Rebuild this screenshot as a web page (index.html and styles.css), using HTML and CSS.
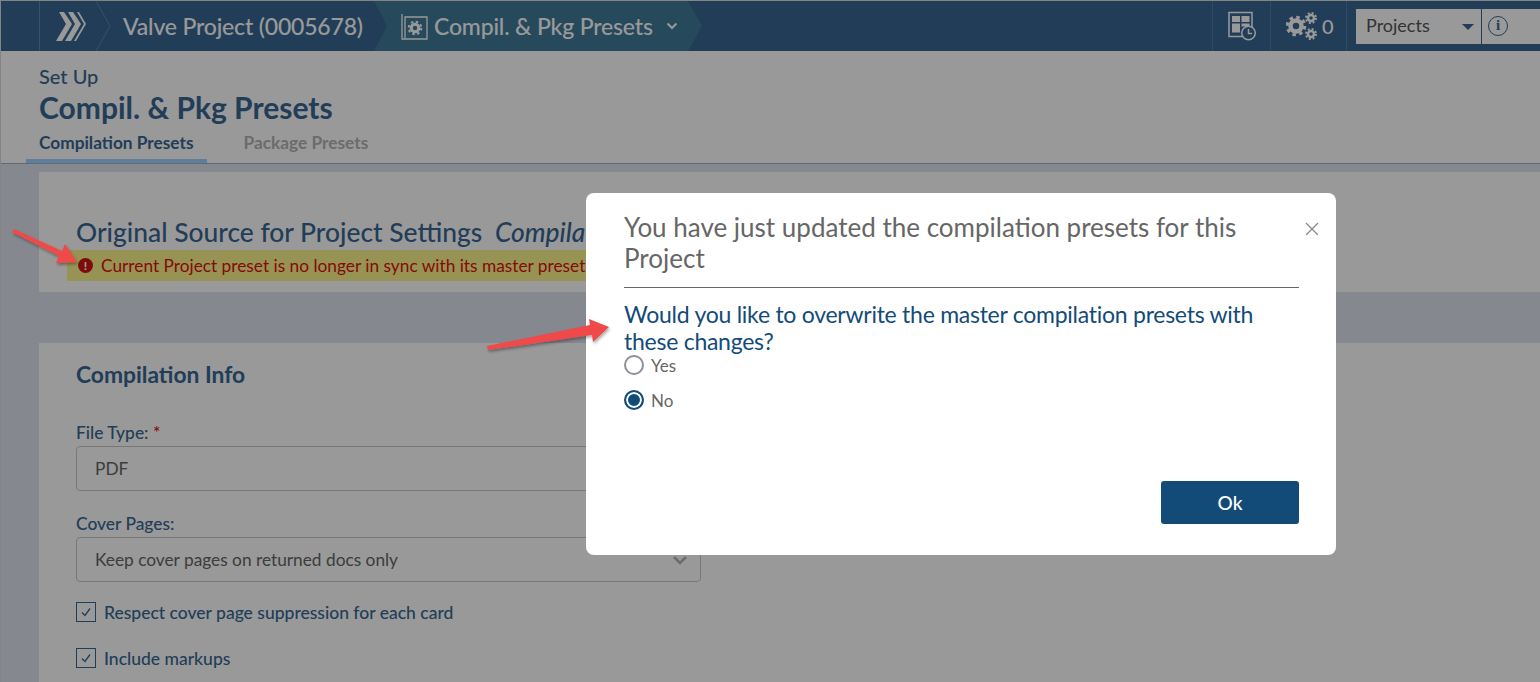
FILE: index.html
```html
<!DOCTYPE html>
<html lang="en">
<head>
  <meta charset="UTF-8">
  <meta name="viewport" content="width=device-width, initial-scale=1.0">
  <title>Compil. &amp; Pkg Presets</title>
  <link rel="stylesheet" href="styles.css">
</head>
<body>
  <div class="frame">
    <header class="topbar">
      <div class="logo-cell">
        <svg class="logo" width="32" height="30" viewBox="0 0 32 30">
          <path d="M4 0h5l8 12L7 29H1l10-17z M13 0h5l8 12-10 17h-6l10-17z M22 0h2l7 12-10 17h-2l10-17z" fill="#fff"/>
        </svg>
      </div>
      <svg class="chev" width="15" height="50" viewBox="0 0 15 50"><path d="M0 0l14 25L0 50" fill="none" stroke="#5d87a8"/></svg>
      <div class="crumb">Valve Project (0005678)</div>
      <div class="crumb-active">
        <svg width="28" height="28" viewBox="0 0 28 28">
          <path d="M1 2v25h25V5H4v21" fill="none" stroke="#fff" stroke-width="1.300"/>
          <circle cx="14" cy="16" r="3.800" fill="none" stroke="#fff" stroke-width="3"/>
          <circle cx="14" cy="16" r="6.300" fill="none" stroke="#fff" stroke-width="2" stroke-dasharray="2.500 2.450"/>
        </svg>
        <span class="crumb-text">Compil. &amp; Pkg Presets</span>
        <svg class="crumb-caret" width="12" height="8" viewBox="0 0 12 8"><path d="M1.500 1.500l4.500 4.500 4.500-4.500" fill="none" stroke="#fff" stroke-width="2"/></svg>
      </div>
      <div class="top-right">
        <div class="tool tool-board">
          <svg width="30" height="30" viewBox="0 0 30 30">
            <path d="M1 1.500h23v24H1z" fill="none" stroke="#fff" stroke-width="1.500"/>
            <path d="M4 5h8v6H4zM13.500 5h8v6h-8zM4 12.500h8v9H4zM13.500 12.500h8v3h-8z" fill="#fff"/>
            <circle cx="20.500" cy="22" r="6.800" fill="#386793" stroke="#fff" stroke-width="1.500"/>
            <path d="M20.500 18v4.500h3.500" fill="none" stroke="#fff" stroke-width="1.500"/>
          </svg>
        </div>
        <div class="tool tool-gears">
          <svg width="34" height="30" viewBox="0 0 34 30">
            <circle cx="10" cy="15" r="5.500" fill="none" stroke="#fff" stroke-width="4.500"/>
            <circle cx="10" cy="15" r="8.800" fill="none" stroke="#fff" stroke-width="3" stroke-dasharray="3.500 3.410"/>
            <circle cx="25" cy="7" r="3" fill="none" stroke="#fff" stroke-width="2.500"/>
            <circle cx="25" cy="7" r="5" fill="none" stroke="#fff" stroke-width="2" stroke-dasharray="2 1.930"/>
            <circle cx="25" cy="23" r="3" fill="none" stroke="#fff" stroke-width="2.500"/>
            <circle cx="25" cy="23" r="5" fill="none" stroke="#fff" stroke-width="2" stroke-dasharray="2 1.930"/>
          </svg>
          <span class="tool-count">0</span>
        </div>
        <div class="scope-select">
          <span>Projects</span>
          <span class="scope-caret"></span>
        </div>
        <div class="info-cell">
          <span class="info-icon">i</span>
        </div>
      </div>
    </header>

    <section class="subhead">
      <div class="subhead-kicker">Set Up</div>
      <h1>Compil. &amp; Pkg Presets</h1>
      <nav class="tabs">
        <a class="tab tab-on">Compilation Presets</a>
        <a class="tab">Package Presets</a>
      </nav>
    </section>

    <main class="content">
      <section class="card card-source">
        <h2>Original Source for Project Settings <em>Compila</em></h2>
        <div class="sync-warning">
          <span class="warn-icon">!</span>
          <span>Current Project preset is no longer in sync with its master preset</span>
        </div>
      </section>

      <section class="card card-info">
        <h3>Compilation Info</h3>
        <label class="field-label">File Type: <span class="req">*</span></label>
        <div class="select-box">PDF</div>
        <label class="field-label">Cover Pages:</label>
        <div class="select-box">
          Keep cover pages on returned docs only
          <svg class="select-caret" width="16" height="10" viewBox="0 0 16 10"><path d="M2 2l6 6 6-6" fill="none" stroke="#b5b5b5" stroke-width="2.500"/></svg>
        </div>
        <div class="check-row">
          <span class="check"><svg width="12" height="12" viewBox="0 0 12 12"><path d="M2 6.500l3 3 5-7" fill="none" stroke="#386793" stroke-width="1.300"/></svg></span>
          Respect cover page suppression for each card
        </div>
        <div class="check-row">
          <span class="check"><svg width="12" height="12" viewBox="0 0 12 12"><path d="M2 6.500l3 3 5-7" fill="none" stroke="#386793" stroke-width="1.300"/></svg></span>
          Include markups
        </div>
      </section>
    </main>
  </div>

  <div class="backdrop">
    <div class="dialog">
      <span class="dialog-close">
        <svg width="14" height="14" viewBox="0 0 14 14"><path d="M1 1l12 12M13 1L1 13" stroke="#8a8a8a" stroke-width="1.300"/></svg>
      </span>
      <div class="dialog-title">You have just updated the compilation presets for this Project</div>
      <div class="dialog-question">Would you like to overwrite the master compilation presets with these changes?</div>
      <div class="radio-row"><span class="radio"></span>Yes</div>
      <div class="radio-row"><span class="radio radio-on"></span>No</div>
      <div class="dialog-foot">
        <button class="btn-ok">Ok</button>
      </div>
    </div>
  </div>

  <!-- callout arrows on top of the screenshot -->
  <svg class="callouts" width="1540" height="682" viewBox="0 0 1540 682">
    <defs>
      <filter id="arrowShadow" x="-20%" y="-40%" width="140%" height="180%">
        <feDropShadow dx="1" dy="2" stdDeviation="1.500" flood-color="#000" flood-opacity=".35"/>
      </filter>
    </defs>
    <g fill="#f04848" filter="url(#arrowShadow)">
      <path d="M12 232l2-3 48 22 3-7 12 18-21 1 3-7z"/>
      <path d="M487 346l103-21-1-6 20 8-16 15-1-7-104 15z"/>
    </g>
  </svg>
</body>
</html>
```

FILE: styles.css
```css
* {
  box-sizing: border-box;
}
html, body {
  margin: 0;
  height: 682px;
  overflow: hidden;
}
body {
  font-family: 'Lato', 'Liberation Sans', sans-serif;
  color: #386793;
  background: #fff;
}
.frame {
  height: 682px;
  padding: 1px 0 0 1px;
  background: #ddd;
}

/* top bar */
.topbar {
  display: flex;
  height: 50px;
  background: #386793;
  color: #fff;
}
.logo-cell {
  width: 57px;
  margin-left: 38px;
  padding: 11px 0 0 15px;
  border-left: 1px solid #5d87a8;
}
.logo {
  display: block;
}
.chev {
  flex: none;
}
.crumb {
  width: 263px;
  padding-left: 12px;
  font-size: 23px;
  font-weight: 500;
  letter-spacing: -0.18px;
  line-height: 50px;
  white-space: nowrap;
}
.crumb-active {
  display: flex;
  align-items: center;
  width: 328px;
  padding: 0 0 0 27px;
  background: #407a99;
  clip-path: polygon(0 0, 314px 0, 100% 50%, 314px 100%, 0 100%, 13px 50%);
}
.crumb-text {
  margin-left: 5px;
  font-size: 23px;
  font-weight: 500;
  letter-spacing: -0.18px;
  white-space: nowrap;
}
.crumb-caret {
  margin-left: 13px;
}
.top-right {
  display: flex;
  margin-left: auto;
  height: 50px;
}
.tool {
  display: flex;
  align-items: center;
  border-left: 1px solid #4f7ea6;
}
.tool-board {
  width: 58px;
  padding-left: 15px;
}
.tool-gears {
  width: 77px;
  padding-left: 15px;
  border-right: 1px solid #4f7ea6;
}
.tool-count {
  margin-left: 2px;
  font-size: 20px;
  font-weight: 500;
}
.scope-select {
  display: flex;
  align-items: center;
  justify-content: space-between;
  width: 125px;
  height: 35px;
  margin: 8px 0 0 9px;
  padding: 0 7px 3px 10px;
  background: #fff;
  color: #555;
  font-size: 18px;
}
.scope-caret {
  width: 0;
  height: 0;
  margin-top: 3px;
  border-left: 6px solid transparent;
  border-right: 6px solid transparent;
  border-top: 6px solid #386793;
}
.info-cell {
  width: 58px;
  height: 35px;
  margin: 8px 0 0 1px;
  padding: 7px 0 0 6px;
  background: #fff;
}
.info-icon {
  display: block;
  width: 20px;
  height: 20px;
  border: 1.500px solid #386793;
  border-radius: 50%;
  color: #386793;
  font-family: 'Liberation Serif', serif;
  font-size: 15px;
  font-weight: 700;
  line-height: 17px;
  text-align: center;
}

/* page title and tabs */
.subhead {
  height: 113px;
  padding: 13px 0 0 38px;
  background: #fff;
  border-bottom: 1px solid #9fb0c8;
}
.subhead-kicker {
  font-size: 20px;
  font-weight: 500;
  line-height: 24px;
}
.subhead h1 {
  margin: 1px 0 0;
  font-size: 30px;
  font-weight: 700;
  line-height: 36px;
}
.tabs {
  display: flex;
  margin: 10px 0 0 -13px;
}
.tab {
  height: 28px;
  margin-right: 24px;
  padding: 0 13px;
  color: #b4b4b4;
  font-size: 17.300px;
  font-weight: 700;
  line-height: 16px;
}
.tab-on {
  color: #386793;
  border-bottom: 4px solid #9ed2ff;
}

/* content */
.content {
  height: 518px;
  padding: 8px 0 0 38px;
  background: #dee3ee;
}
.card {
  background: #fff;
  padding-left: 37px;
}
.card-source {
  height: 120px;
  padding-top: 43px;
}
.card-source h2 {
  margin: 0;
  font-size: 26.400px;
  font-weight: 500;
  line-height: 35px;
  white-space: nowrap;
}
.card-source em {
  margin-left: 6px;
  font-weight: 500;
}
.sync-warning {
  display: flex;
  align-items: center;
  width: 560px;
  height: 31px;
  margin-left: -9px;
  padding-left: 11px;
  background: #fbf68c;
  color: #e01010;
  font-size: 17.300px;
  white-space: nowrap;
}
.warn-icon {
  flex: none;
  width: 15px;
  height: 15px;
  margin-right: 8px;
  border-radius: 50%;
  background: #d31414;
  color: #fff;
  font-size: 12px;
  font-weight: 900;
  line-height: 15px;
  text-align: center;
}
.card-info {
  height: 340px;
  margin-top: 51px;
  padding-top: 16px;
}
.card-info h3 {
  margin: 0 0 34px;
  font-size: 22.800px;
  font-weight: 700;
  line-height: 30px;
}
.field-label {
  display: block;
  margin-bottom: 3px;
  font-size: 17.400px;
  font-weight: 500;
  line-height: 20px;
}
.req {
  color: #e01010;
}
.select-box {
  position: relative;
  width: 625px;
  height: 45px;
  margin-bottom: 23px;
  padding-left: 18px;
  border: 1px solid #c9c9c9;
  border-radius: 4px;
  color: #666;
  font-size: 17.300px;
  line-height: 43px;
}
.select-caret {
  position: absolute;
  top: 17px;
  right: 12px;
}
.check-row {
  display: flex;
  align-items: center;
  height: 20px;
  margin-bottom: 26px;
  font-size: 17.500px;
  font-weight: 500;
}
.select-box + .check-row {
  margin-top: -3px;
}
.check {
  display: flex;
  align-items: center;
  justify-content: center;
  width: 20px;
  height: 20px;
  margin-right: 8px;
  border: 1px solid #386793;
}

/* modal */
.backdrop {
  position: fixed;
  inset: 0;
  padding: 193px 0 0 586px;
  background: rgba(0, 0, 0, 0.4);
}
.dialog {
  position: relative;
  width: 750px;
  height: 362px;
  padding: 19px 37px 0 38px;
  background: #fff;
  border-radius: 8px;
}
.dialog-close {
  position: absolute;
  top: 27px;
  right: 17px;
}
.dialog-title {
  padding-right: 40px;
  padding-bottom: 13px;
  border-bottom: 1px solid #666;
  color: #666;
  font-size: 26px;
  line-height: 31px;
}
.dialog-question {
  margin-top: 13px;
  color: #134b78;
  font-size: 23px;
  letter-spacing: -0.26px;
  line-height: 27px;
}
.radio-row {
  display: flex;
  align-items: center;
  height: 20px;
  margin-bottom: 15px;
  color: #666;
  font-size: 17px;
}
.radio {
  width: 20px;
  height: 20px;
  margin-right: 7px;
  border: 2px solid #8f8f9a;
  border-radius: 50%;
}
.radio-on {
  border-color: #134b78;
  background: #134b78;
  box-shadow: inset 0 0 0 2px #fff;
}
.dialog-foot {
  display: flex;
  justify-content: flex-end;
  margin-top: 71px;
}
.btn-ok {
  width: 138px;
  height: 43px;
  border: 0;
  border-radius: 3px;
  background: #134b78;
  color: #fff;
  font-family: inherit;
  font-size: 19px;
  font-weight: 500;
}
.callouts {
  position: fixed;
  top: 0;
  left: 0;
}
```
